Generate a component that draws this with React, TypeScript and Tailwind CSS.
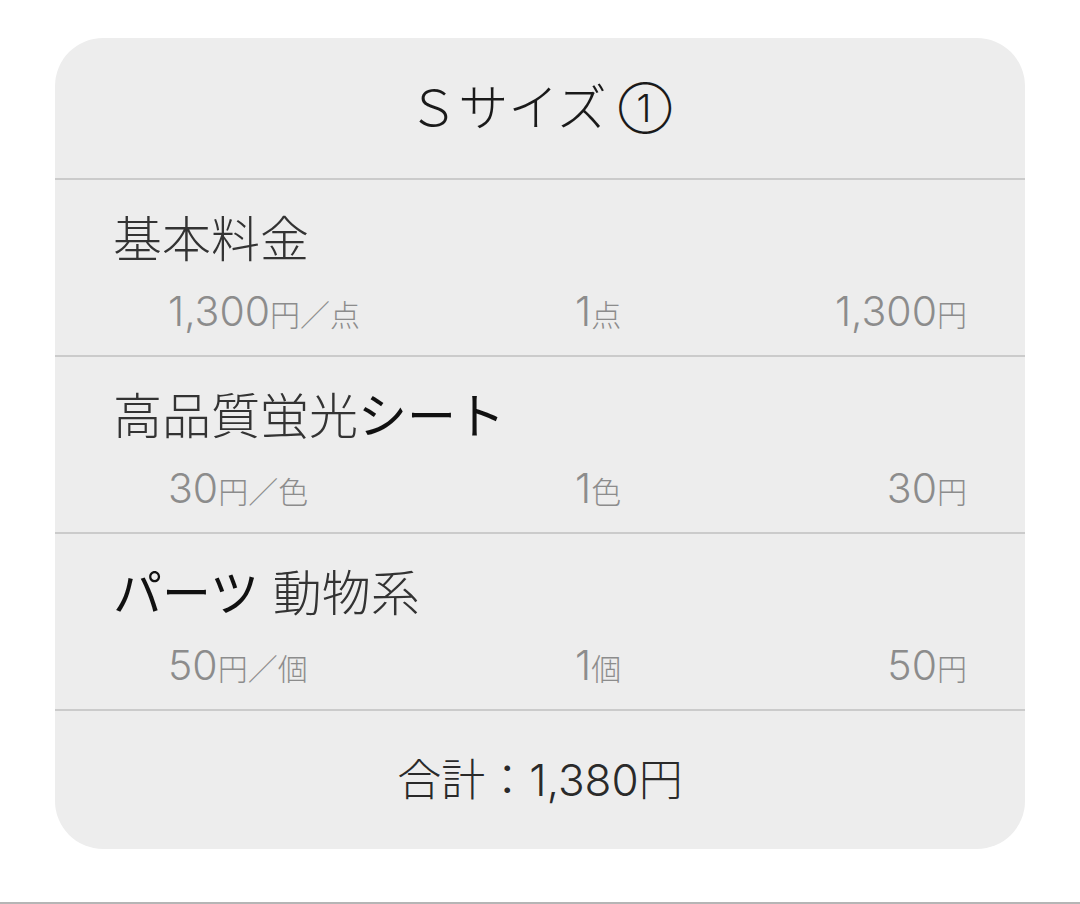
const jp = "font-['Inter','Noto_Sans_CJK_JP',sans-serif]"

type Item = {
  label: React.ReactNode
  unit: string
  unitLabel: string
  qty: string
  total: string
}

const items: Item[] = [
  {
    label: <span className="text-[#333]">基本料金</span>,
    unit: "1,300",
    unitLabel: "点",
    qty: "1",
    total: "1,300",
  },
  {
    label: (
      <>
        <span className="text-[#333]">高品質蛍光</span>
        <span className="font-normal text-[#111]">シート</span>
      </>
    ),
    unit: "30",
    unitLabel: "色",
    qty: "1",
    total: "30",
  },
  {
    label: (
      <>
        <span className="font-normal text-[#111]">パーツ</span>
        <span className="text-[#333]"> 動物系</span>
      </>
    ),
    unit: "50",
    unitLabel: "個",
    qty: "1",
    total: "50",
  },
]

function Small({ children }: { children: React.ReactNode }) {
  return <span className="text-[30px]">{children}</span>
}

function Row({ item }: { item: Item }) {
  return (
    <div className="h-[177px] border-t-2 border-[#cbcbcb] px-[58px] pt-[32px]">
      <div className="text-[49px] leading-[56px] font-light">{item.label}</div>
      <div className="mt-[18px] flex items-baseline text-[41px] leading-[50px] font-light text-[#8c8c8c]">
        <div className="w-[462px] pl-[55px]">
          {item.unit}
          <Small>円／{item.unitLabel}</Small>
        </div>
        <div>
          {item.qty}
          <Small>{item.unitLabel}</Small>
        </div>
        <div className="ml-auto">
          {item.total}
          <Small>円</Small>
        </div>
      </div>
    </div>
  )
}

export default function App() {
  return (
    <div className={`h-[904px] bg-white pt-[38px] border-b-2 border-[#b5b5b5] ${jp}`}>
      <div className="mx-[55px] w-[970px] rounded-[48px] bg-[#ededed]">
        <div className="flex h-[140px] items-center justify-center text-[50px] font-light text-[#1a1a1a]">
          <span>Ｓサイズ</span>
          <span className="ml-[12px] text-[38px]">①</span>
        </div>
        {items.map((item, i) => (
          <Row key={i} item={item} />
        ))}
        <div className="flex h-[140px] items-center justify-center border-t-2 border-[#cbcbcb] text-[44px] font-light text-[#2a2a2a]">
          合計：1,380円
        </div>
      </div>
    </div>
  )
}
